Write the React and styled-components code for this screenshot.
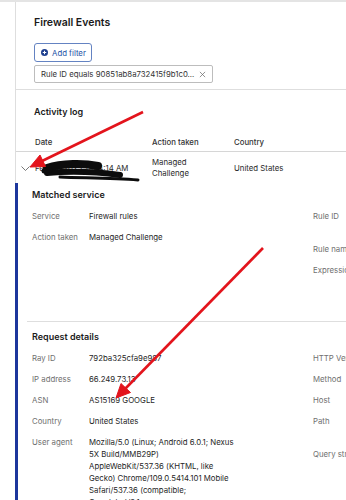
import React from "react";
import styled, { createGlobalStyle } from "styled-components";

const GlobalStyle = createGlobalStyle`
  html, body { margin:0; padding:0; background:#fff; }
  body {
    font-family: Inter, "Liberation Sans", sans-serif;
    overflow:hidden;
    color:#1f1f1f;
  }
`;

const Page = styled.div`
  position:relative;
  width:346px;
  height:500px;
  overflow:hidden;
  border-top:2px solid #e4e4e4;
  box-sizing:border-box;
`;

const Main = styled.main`
  margin-left:15px;
  width:470px;
`;

const Header = styled.header`
  border-left:1px solid #dedede;
  border-bottom:1px solid #dedede;
  padding:14px 0 6px 18px;
`;

const Title = styled.h1`
  margin:0 0 13px;
  font-size:10.5px;
  line-height:14px;
  font-weight:600;
  color:#1a1a1a;
`;

const AddFilter = styled.button`
  display:flex;
  align-items:center;
  gap:4px;
  height:19px;
  box-sizing:border-box;
  padding:0 5px 0 6px;
  margin-bottom:3px;
  background:#fff;
  border:1px solid #6483c2;
  border-radius:3px;
  font-family:inherit;
  font-size:7.8px;
  color:#2452a6;
`;

const Chip = styled.div`
  display:flex;
  width:fit-content;
  align-items:center;
  gap:5px;
  height:18px;
  box-sizing:border-box;
  padding:0 6px;
  border:1px solid #bdbdbd;
  border-radius:2px;
  font-size:7.8px;
  color:#333;
`;

const Activity = styled.section`
  border-left:1px solid #dedede;
  padding-top:16px;
`;

const SectionTitle = styled.h2`
  margin:0;
  padding-left:${p => p.$indent}px;
  font-size:9px;
  line-height:12px;
  font-weight:600;
  color:#1b1b1b;
`;

const TableRow = styled.div`
  display:grid;
  grid-template-columns:19px 117px 82px 1fr;
  align-items:center;
  font-size:7.8px;
`;

const TableHead = styled(TableRow)`
  margin-top:18px;
  padding-bottom:3px;
  line-height:12px;
  border-bottom:1px solid #d6d6d6;
  font-weight:500;
  color:#333;
`;

const DataRow = styled(TableRow)`
  padding:5px 0 4px;
  line-height:11px;
  color:#2a2a2a;
`;

const Chevron = styled.span`
  display:flex;
  justify-content:center;
  padding-right:1px;
`;

const Detail = styled.section`
  border-left:3px solid #1c369c;
  padding-top:6px;
`;

const Columns = styled.div`
  display:flex;
  margin-top:9px;
  padding-left:14px;
`;

const Column = styled.div`
  display:flex;
  flex-direction:column;
  gap:9px;
  width:${p => p.$width || "auto"};
  flex-shrink:0;
`;

const Field = styled.div`
  display:grid;
  grid-template-columns:${p => p.$label || 57}px 1fr;
  min-height:${p => (p.$lines || 1) * 12}px;
  font-size:7.8px;
  line-height:12px;
`;

const Label = styled.span`
  color:#707070;
  white-space:nowrap;
`;

const Value = styled.span`
  color:#1f1f1f;
  white-space:pre-line;
`;

const Divider = styled.hr`
  margin:45px 0 9px 9px;
  border:0;
  height:1px;
  background:#dedede;
`;

const Notes = styled.svg`
  position:absolute;
  left:0;
  top:0;
  pointer-events:none;
`;

const PlusCircle = () => (
  <svg width="7" height="7" viewBox="0 0 8 8">
    <circle cx="4" cy="4" r="4" fill="#1e3f8f" />
    <path d="M4 2v4M2 4h4" stroke="#fff" strokeWidth="1.2" />
  </svg>
);

const Close = () => (
  <svg width="7" height="7" viewBox="0 0 8 8">
    <path d="M1 1l6 6M7 1L1 7" stroke="#666" strokeWidth="0.8" fill="none" />
  </svg>
);

const Caret = () => (
  <svg width="9" height="5" viewBox="0 0 9 5">
    <polyline points="0.5,0.5 4.5,4.5 8.5,0.5" stroke="#555" strokeWidth="0.8" fill="none" />
  </svg>
);

const matched = [
  ["Service", "Firewall rules"],
  ["Action taken", "Managed Challenge"],
];

const matchedRight = [
  ["Rule ID", "90851ab8a732415f9b1c0\n2c0ef6a0e4d", 2],
  ["Rule name", "Block bots", 1],
  ["Expression", "(cf.client.bot)", 1],
];

const userAgent = [
  "Mozilla/5.0 (Linux; Android 6.0.1; Nexus",
  "5X Build/MMB29P)",
  "AppleWebKit/537.36 (KHTML, like",
  "Gecko) Chrome/109.0.5414.101 Mobile",
  "Safari/537.36 (compatible;",
  "Googlebot/2.1;",
  "+http://www.google.com/bot.html)",
].join("\n");

const request = [
  ["Ray ID", "792ba325cfa9e987"],
  ["IP address", "66.249.73.13"],
  ["ASN", "AS15169 GOOGLE"],
  ["Country", "United States"],
  ["User agent", userAgent],
];

const requestRight = [
  ["HTTP Version", "HTTP/2", 1],
  ["Method", "GET", 1],
  ["Host", "example.com", 1],
  ["Path", "/", 2],
  ["Query string", "", 1],
];

const App = () => {
  return (
    <Page>
      <GlobalStyle />
      <Main>
        <Header>
          <Title>Firewall Events</Title>
          <AddFilter>
            <PlusCircle />
            Add filter
          </AddFilter>
          <Chip>
            Rule ID equals 90851ab8a732415f9b1c0...
            <Close />
          </Chip>
        </Header>

        <Activity>
          <SectionTitle $indent={18}>Activity log</SectionTitle>
          <TableHead>
            <span />
            <span>Date</span>
            <span>Action taken</span>
            <span>Country</span>
          </TableHead>
          <DataRow>
            <Chevron><Caret /></Chevron>
            <span>Feb 14, 2023 11:44:14 AM</span>
            <span>Managed<br />Challenge</span>
            <span>United States</span>
          </DataRow>
        </Activity>

        <Detail>
          <SectionTitle $indent={14}>Matched service</SectionTitle>
          <Columns>
            <Column $width="281px">
              {matched.map(([k, v]) => (
                <Field key={k}><Label>{k}</Label><Value>{v}</Value></Field>
              ))}
            </Column>
            <Column>
              {matchedRight.map(([k, v, n]) => (
                <Field key={k} $label={74} $lines={n}><Label>{k}</Label><Value>{v}</Value></Field>
              ))}
            </Column>
          </Columns>

          <Divider />

          <SectionTitle $indent={14}>Request details</SectionTitle>
          <Columns>
            <Column $width="281px">
              {request.map(([k, v]) => (
                <Field key={k}><Label>{k}</Label><Value>{v}</Value></Field>
              ))}
            </Column>
            <Column>
              {requestRight.map(([k, v, n]) => (
                <Field key={k} $label={74} $lines={n}><Label>{k}</Label><Value>{v}</Value></Field>
              ))}
            </Column>
          </Columns>
        </Detail>
      </Main>

      {/* annotations drawn over the screenshot */}
      <Notes width="346" height="500" viewBox="0 0 346 500">
        <g stroke="#0c0c0c" strokeLinecap="round" fill="none">
          <path d="M47 166 C62 161, 84 161, 98 164" strokeWidth="8" />
          <path d="M47 171 C68 169, 98 170, 120 173" strokeWidth="6" />
          <path d="M60 175 C84 176, 112 176, 138 178" strokeWidth="3" />
          <path d="M44 169 L50 168" strokeWidth="5" />
        </g>
        <g fill="#e3141c" stroke="#e3141c">
          <line x1="143" y1="110" x2="40" y2="160" strokeWidth="2.6" />
          <polygon points="30,165 45.5,164.5 40,153" strokeWidth="1" />
          <line x1="263" y1="246" x2="124" y2="388" strokeWidth="2.6" />
          <polygon points="116,396 130.5,390.5 121,381.5" strokeWidth="1" />
        </g>
      </Notes>
    </Page>
  );
};

export default App;
